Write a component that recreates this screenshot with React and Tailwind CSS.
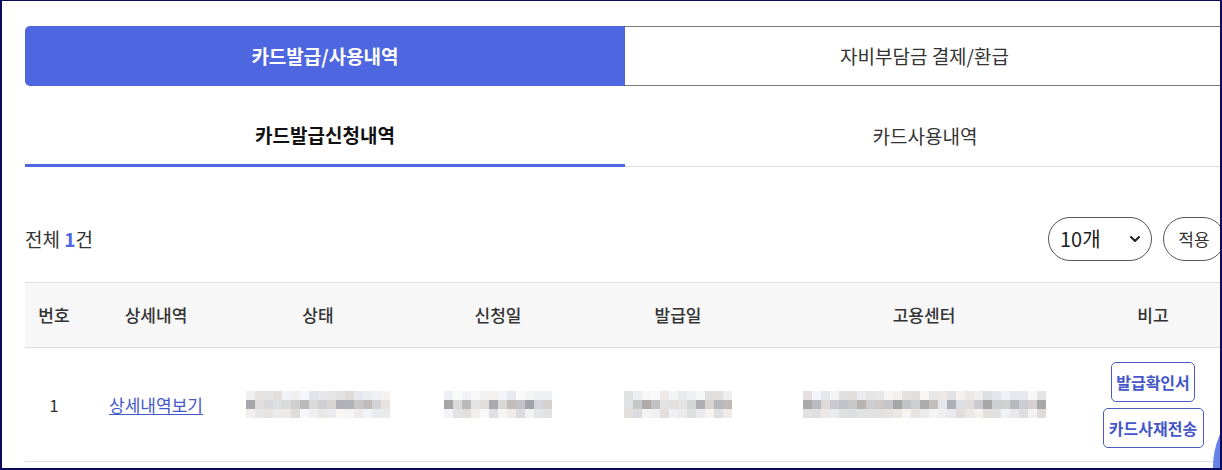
import React from 'react';

const FONT = { fontFamily: '"Noto Sans CJK KR", "Noto Sans", sans-serif' };

// mosaic block standing in for the blurred (masked) cell values
function Mosaic({ cols, seed }) {
    let s = seed;
    const rnd = () => {
        s = (s * 9301 + 49297) % 233280;
        return s / 233280;
    };
    const rows = [0, 1, 2].map((r) =>
        Array.from({ length: cols }, () => {
            const v = r === 1 ? 165 + Math.floor(rnd() * 70) : 222 + Math.floor(rnd() * 28);
            const tint = Math.floor(rnd() * 3);
            const c = tint === 0 ? `rgb(${v},${v - 4},${v - 6})` : tint === 1 ? `rgb(${v - 4},${v - 2},${v + 4 > 255 ? 255 : v + 4})` : `rgb(${v},${v},${v})`;
            return c;
        })
    );
    return (
        <div className="flex flex-col">
            {rows.map((row, i) => (
                <div key={i} className="flex">
                    {row.map((c, j) => (
                        <div key={j} className="w-[9px] h-[9px]" style={{ backgroundColor: c }} />
                    ))}
                </div>
            ))}
        </div>
    );
}

const GRID = 'grid grid-cols-[58px_146px_178px_182px_178px_314px_144px]';

export default function App() {
    const headers = ['번호', '상세내역', '상태', '신청일', '발급일', '고용센터', '비고'];

    return (
        <div
            className="relative w-[1222px] h-[470px] overflow-hidden bg-white border-t border-l-2 border-r-2 border-b-2 border-[#0b0b5e] text-[#333]"
            style={FONT}
        >
            <div className="ml-[23px] mt-[25px] w-[1200px]">
                {/* top tabs */}
                <div className="flex h-[60px]">
                    <div className="w-[600px] flex items-center justify-center bg-[#4e66e0] rounded-l-[5px] text-white text-[19px] font-bold">
                        카드발급/사용내역
                    </div>
                    <div className="flex-1 flex items-center justify-center border-y border-r border-[#777] text-[19px] text-[#333]">
                        자비부담금 결제/환급
                    </div>
                </div>

                {/* sub tabs */}
                <div className="flex h-[81px]">
                    <div className="w-[600px] flex items-center justify-center pt-[21px] border-b-[3px] border-[#4e66e0] text-[19px] font-bold text-[#111]">
                        카드발급신청내역
                    </div>
                    <div className="flex-1 flex items-center justify-center pt-[21px] border-b border-[#ddd] text-[19px] text-[#333]">
                        카드사용내역
                    </div>
                </div>

                {/* count + page size */}
                <div className="mt-[50px] h-[44px] flex items-center justify-between">
                    <div className="text-[19px] text-[#333]">
                        전체 <span className="font-bold text-[#4e66e0]">1</span>건
                    </div>
                    <div className="flex items-center gap-[11px]">
                        <div className="w-[104px] h-[44px] rounded-full border border-[#555] flex items-center justify-between pl-[11px] pr-[10px] text-[20px] text-[#222]">
                            <span>10개</span>
                            <svg width="12" height="12" viewBox="0 0 12 12" fill="none">
                                <path d="M2 4l4 4 4-4" stroke="#222" strokeWidth="2" strokeLinecap="round" strokeLinejoin="round" />
                            </svg>
                        </div>
                        <div className="w-[62px] h-[44px] rounded-full border border-[#555] flex items-center justify-center text-[17px] text-[#333]">
                            적용
                        </div>
                    </div>
                </div>

                {/* table */}
                <div className="mt-[21px]">
                    <div className={`${GRID} h-[66px] items-center bg-[#f7f7f7] border-y border-[#ddd]`}>
                        {headers.map((h) => (
                            <div key={h} className="text-center text-[17px] font-medium text-[#333]">
                                {h}
                            </div>
                        ))}
                    </div>
                    <div className={`${GRID} h-[114px] items-center border-b border-[#ddd]`}>
                        <div className="text-center text-[17px] text-[#333]">1</div>
                        <div className="text-center">
                            <span className="text-[17px] text-[#4458c8] underline underline-offset-2">상세내역보기</span>
                        </div>
                        <div className="flex justify-center"><Mosaic cols={16} seed={11} /></div>
                        <div className="flex justify-center"><Mosaic cols={12} seed={37} /></div>
                        <div className="flex justify-center"><Mosaic cols={12} seed={73} /></div>
                        <div className="flex justify-center"><Mosaic cols={27} seed={101} /></div>
                        <div className="flex flex-col items-center gap-[6px]">
                            <div className="w-[84px] h-[40px] flex items-center justify-center rounded-[5px] border border-[#4d5bc0] text-[16px] font-bold text-[#4556c9]">
                                발급확인서
                            </div>
                            <div className="w-[101px] h-[40px] flex items-center justify-center rounded-[5px] border border-[#4d5bc0] text-[16px] font-bold text-[#4556c9]">
                                카드사재전송
                            </div>
                        </div>
                    </div>
                </div>
            </div>

            {/* floating button, mostly off-screen */}
            <div className="absolute left-[1211px] top-[386px] w-[160px] h-[160px] rounded-full bg-[#6482e8]" />
        </div>
    );
}
